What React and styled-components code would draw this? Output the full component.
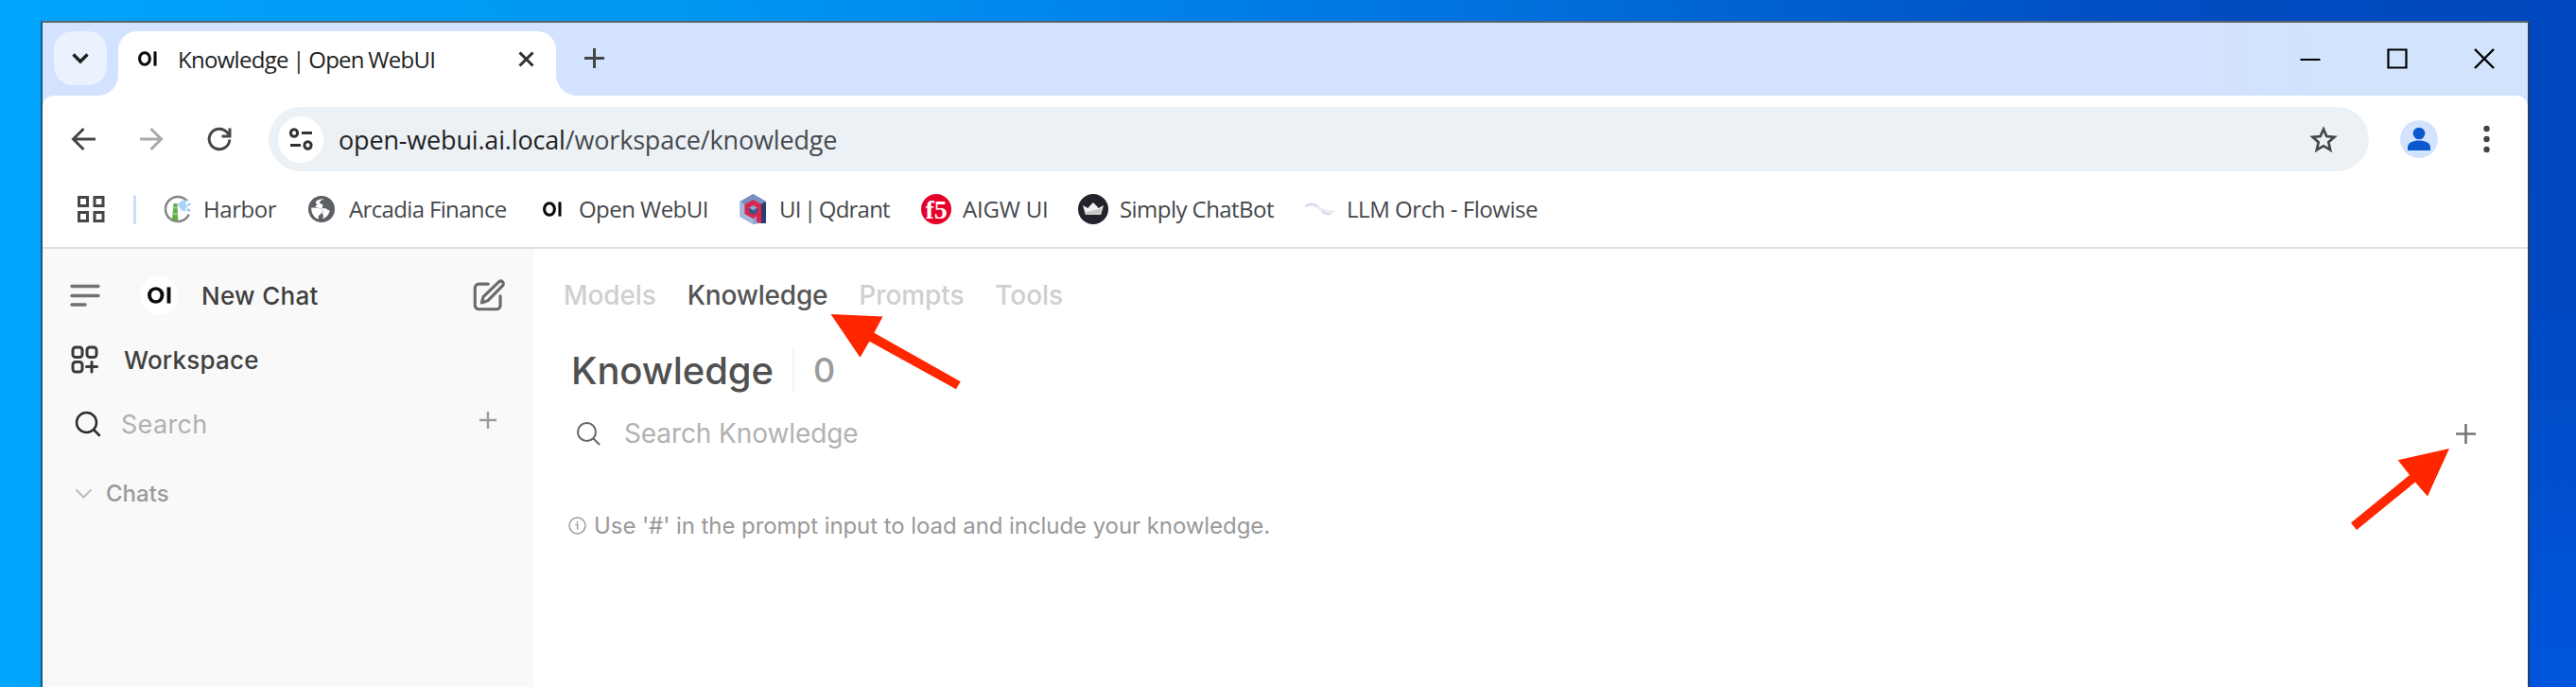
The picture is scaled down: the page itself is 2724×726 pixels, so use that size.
import React from 'react';
import styled, { createGlobalStyle } from 'styled-components';

const UI = '"Open Sans", "Noto Sans", sans-serif';
const APP = 'Inter, "Liberation Sans", sans-serif';

const Global = createGlobalStyle`
  * { box-sizing: border-box; }
  body { margin: 0; overflow: hidden; }
`;

/* ---------- desktop and window frame ---------- */
const Desktop = styled.div`
  width: 2724px;
  height: 726px;
  padding: 22px 49px 0 43px;
  overflow: hidden;
  position: relative;
  background:
    linear-gradient(to bottom, #0048bd, #0049c2 45%, #0055dc) right top / 49px 100% no-repeat,
    linear-gradient(to right, #00a5fd 0%, #009ef7 9%, #0098f1 26%, #0089ed 39%, #0074df 56%, #005fce 70%, #004fc2 82%, #0047bc 100%);
`;
const Window = styled.div`
  display: flex;
  flex-direction: column;
  height: 704px;
  background: #fff;
  border: solid;
  border-width: 2px 2px 0;
  border-color: #56646f #1d3f70 #000 #145a82;
`;

/* ---------- tab strip ---------- */
const TabStrip = styled.div`
  display: flex;
  align-items: flex-start;
  height: 77px;
  padding: 9px 35px 0 12px;
  background: linear-gradient(90deg, #d3e2fe 87%, #d1e4fc 92%);
`;
const TabSearch = styled.div`
  display: flex;
  align-items: center;
  justify-content: center;
  width: 56px;
  height: 57px;
  border-radius: 20px;
  background: #eaf3fd;
`;
const Tab = styled.div`
  position: relative;
  display: flex;
  align-items: center;
  width: 463px;
  height: 68px;
  margin-left: 12px;
  padding: 0 23px 10px 21px;
  border-radius: 20px 20px 0 0;
  background: #fff;
  &::before, &::after {
    content: '';
    position: absolute;
    bottom: 0;
    width: 22px;
    height: 22px;
  }
  &::before { left: -22px; background: radial-gradient(circle at 0 0, transparent 21.5px, #fff 22.5px); }
  &::after { right: -22px; background: radial-gradient(circle at 100% 0, transparent 21.5px, #fff 22.5px); }
`;
const TabTitle = styled.span`
  flex: 1;
  margin-left: 22px;
  font: 24px ${UI};
  letter-spacing: -0.72px;
  word-spacing: -1px;
  white-space: nowrap;
  color: #1f1f1f;
`;
const NewTab = styled.div`
  display: flex;
  margin: 18px 0 0 30px;
`;
const WindowControls = styled.div`
  display: flex;
  gap: 70px;
  margin: 18px 0 0 auto;
`;

/* ---------- toolbar ---------- */
const ToolbarBack = styled.div`background: #d1e3fd;`;
const Toolbar = styled.div`
  display: flex;
  align-items: center;
  height: 92px;
  padding: 0 38px 0 29px;
  border-radius: 12px 12px 0 0;
  background: #fff;
`;
const NavButtons = styled.div`
  display: flex;
  gap: 44px;
`;
const AddressBar = styled.div`
  display: flex;
  align-items: center;
  flex: 1;
  height: 68px;
  margin: 0 33px 0 38px;
  padding: 0 33px 0 10px;
  border-radius: 34px;
  background: #ecf1f6;
`;
const SiteInfo = styled.div`
  display: flex;
  align-items: center;
  justify-content: center;
  width: 48px;
  height: 49px;
  border-radius: 50%;
  background: #fff;
`;
const Url = styled.span`
  flex: 1;
  margin-left: 16px;
  font: 27px ${UI};
  letter-spacing: -0.17px;
  white-space: nowrap;
  color: #474a4e;
  b { font-weight: 400; color: #1f1f1f; }
`;
const Avatar = styled.div`
  display: flex;
  width: 40px;
  height: 40px;
  margin-right: 47px;
  border-radius: 50%;
  background: #d3e3fd;
`;

/* ---------- bookmarks ---------- */
const Bookmarks = styled.div`
  display: flex;
  align-items: center;
  height: 70px;
  padding: 0 0 12px 37px;
  border-bottom: 2px solid #e0e0e0;
  background: #fff;
`;
const Separator = styled.div`
  width: 3px;
  height: 31px;
  margin-left: 30px;
  border-radius: 2px;
  background: #c9defc;
`;
const Spacer = styled.div`width: 30px;`;
const Bookmark = styled.div`
  display: flex;
  align-items: center;
  flex: none;
  gap: ${(p) => p.$gap}px;
  width: ${(p) => p.$width}px;
`;
const BookmarkName = styled.span`
  font: 24px ${UI};
  letter-spacing: ${(p) => p.$spacing}px;
  word-spacing: ${(p) => p.$word || 0}px;
  white-space: nowrap;
  color: #44474c;
  margin-top: -2px;
`;

/* ---------- page ---------- */
const Page = styled.div`
  display: flex;
  flex: 1;
`;
const Sidebar = styled.aside`
  width: 519px;
  padding-top: 15px;
  background: #f9f9f9;
`;
const SideRow = styled.div`
  display: flex;
  align-items: center;
  height: ${(p) => p.$height || 68}px;
  padding: 0 ${(p) => p.$right || 0}px 0 ${(p) => p.$left}px;
`;
const SideLabel = styled.span`
  flex: 1;
  margin-left: ${(p) => p.$gap}px;
  font: ${(p) => p.$weight || 450} ${(p) => p.$size || 26}px ${APP};
  letter-spacing: ${(p) => p.$spacing || 0}px;
  color: ${(p) => p.$color || '#3f3f3f'};
  white-space: nowrap;
`;
const LogoBadge = styled.div`
  display: flex;
  align-items: center;
  justify-content: center;
  width: 40px;
  height: 42px;
  margin-left: 42px;
  border-radius: 50%;
  background: #fff;
`;
const PlusShift = styled.div`
  display: flex;
  padding-bottom: 8px;
`;
const Main = styled.main`
  flex: 1;
  padding: 16px 55px 0 0;
  background: #fff;
`;
const SectionNav = styled.nav`
  display: flex;
  align-items: center;
  gap: 33px;
  height: 66px;
  padding-left: 32px;
`;
const SectionLink = styled.span`
  font: 500 28px ${APP};
  letter-spacing: ${(p) => (p.$active ? -0.2 : -0.1)}px;
  color: ${(p) => (p.$active ? '#545454' : '#cfcfcf')};
`;
const Heading = styled.div`
  display: flex;
  align-items: center;
  height: 92px;
  padding-left: 40px;
`;
const Title = styled.h1`
  width: 234px;
  margin: 0;
  font: 450 40px ${APP};
  letter-spacing: -0.1px;
  color: #505050;
`;
const Count = styled.span`
  display: flex;
  align-items: center;
  height: 47px;
  padding-left: 20px;
  border-left: 2px solid #f3f3f3;
  font: 450 36px ${APP};
  color: #9b9b9b;
`;
const SearchRow = styled.div`
  display: flex;
  align-items: center;
  height: 42px;
  padding-left: 45px;
`;
const Placeholder = styled.span`
  flex: 1;
  margin-left: 25px;
  font: 28px ${APP};
  letter-spacing: -0.1px;
  color: #b2b2b2;
`;
const Hint = styled.div`
  display: flex;
  align-items: center;
  gap: 8px;
  height: 40px;
  margin-top: 56px;
  padding-left: 37px;
  font: 24px ${APP};
  letter-spacing: -0.07px;
  color: #999;
  white-space: nowrap;
`;
const Annotations = styled.svg`
  position: absolute;
  inset: 0;
`;
const Svg = styled.svg`
  display: block;
  flex: none;
  overflow: visible;
`;

/* ---------- drawings ---------- */
const Icon = ({ w, h = w, vb, children, color = '#444', sw = 3, cap = 'butt' }) => (
  <Svg width={w} height={h} viewBox={vb || `0 0 ${w} ${h}`} preserveAspectRatio="none" fill="none" stroke={color} strokeWidth={sw} strokeLinecap={cap} strokeLinejoin={cap === 'round' ? 'round' : 'miter'}>
    {children}
  </Svg>
);

const OpenLogo = ({ w = 20, h = 16 }) => (
  <Icon w={w} h={h} vb="0 0 20 16" color="#0b0b0b" sw={3.1}>
    <ellipse cx="7" cy="8" rx="5.4" ry="6.3" />
    <path d="M18 0.4V15.6" />
  </Icon>
);

const HarborIcon = () => (
  <Icon w={28} sw={0}>
    <path d="M25.8 19.5A13 13 0 1 1 23 4.6" stroke="#858585" strokeWidth="2.5" />
    <path d="M9.5 8h4l.8 18.5c-2.2 .5-4.8 0-6.3-1z" fill="#5fae48" />
    <path d="M8.8 12.5h5.5M8.5 19h6" stroke="#a9d69b" strokeWidth="1.5" />
    <path d="M14 9l5-4.5 4 1-1 3 3 2-3 3 1 3-5-1z" fill="#a8d3fa" />
    <path d="M23 5l2-1M24.5 9h3M24 14l3 2" stroke="#8cc0f2" strokeWidth="2.2" />
  </Icon>
);

const GlobeIcon = () => (
  <Icon w={28} sw={0}>
    <circle cx="14" cy="14" r="14" fill="#5c5f63" />
    <path d="M3.2 12.6c3.5.1 7.6.1 9.6 1 1.7.8 3 1.5 2.7 3.1-.3 1.3-2.1 1-2.3 2.3-.1 1.3-2.500 1.200-2.500 2.700 0 1.200.3 2.200.2 3.100C6.500 23.500 3 19 3.200 12.600z" fill="#fff" />
    <path d="M16.5 3.2c-2 .9-4.5 2.2-4.700 3.900-.1 1.500 2.500 1 3.500 2.300.9 1.200-1.500 2.500-.3 3.400 1.300.9 3 .2 4.400.9 1 .5 1.300 2 3.400 1.300-.4 3.500-2.800 7.500-7.500 9.300-.3-1.800 1.400-2.800.4-4-1-1.100-1.200-1.500-.2-2.800.8-1-.1-3.200-2-4-2-.9-5.200-.6-6-1.900-.6-1.300 1.800-1.500 2.500-2.500-1.800-.6-2.600-1.500-2.100-2.900C9.500 4.200 13 2.800 16.500 3.200z" fill="#fff" />
  </Icon>
);

const QdrantIcon = () => (
  <Icon w={29} h={32} sw={0}>
    <path d="M14.5 0L28 8v23h-6l-7.5 1L0.5 24V8z" fill="#8ba3cd" />
    <path d="M14.5 0L28 8l-5 3-8.5-5-9 5L0.5 8z" fill="#7790c0" />
    <path d="M28 8v23h-6V11z" fill="#293d70" />
    <path d="M0.5 8l5 3v10l9 5.5V32L0.5 24z" fill="#a4b8dc" />
    <path d="M14.5 6l8.5 5v20l-5-1.5v-6l-3.5 2.5-9-5V11z" fill="#dc244c" />
    <path d="M14.5 12l4.5 2.5v5L14.5 22 10 19.5v-5z" fill="#3b5587" />
    <path d="M14.5 12l4.5 2.5-4.5 2.7-4.5-2.7z" fill="#91a8d0" />
  </Icon>
);

const F5Text = styled.text`
  font: 700 28px/1 "Liberation Serif", serif;
  letter-spacing: 0;
`;
const F5Icon = () => (
  <Icon w={32} sw={0}>
    <circle cx="16" cy="16" r="16" fill="#e4002b" />
    <F5Text x="4.5" y="25.5" fill="#fff">f5</F5Text>
  </Icon>
);

const CrownIcon = () => (
  <Icon w={32} sw={0}>
    <circle cx="16" cy="16" r="16" fill="#23242b" />
    <path d="M5 12l5.5 3 1.5-2 4-4 4 4 1.5 2L27 12l-3 10H8z" fill="#f1f1f1" />
    <path d="M7.2 19.5L26 15l-2 7H8z" fill="#c9c9c9" />
  </Icon>
);

const FlowiseIcon = () => (
  <Icon w={32} h={14} color="#cdd2e8" sw={1}>
    <path d="M0 5c4-6 10-4 14-1s9 6 17 5c-4 5-10 4-14 0S7 1 0 5z" fill="#f0f1f7" stroke="#e3e5f0" />
    <path d="M0 4c5-4 10-3 14 0M18 9c3 3 6 4 9 3" stroke="#ccd2e8" strokeWidth="1.5" />
  </Icon>
);

const BOOKMARKS = [
  { name: 'Harbor', icon: <HarborIcon />, width: 152, gap: 13, spacing: -0.45 },
  { name: 'Arcadia Finance', icon: <GlobeIcon />, width: 248, gap: 15, spacing: -0.65 },
  { name: 'Open WebUI', icon: <OpenLogo />, width: 208, gap: 18, spacing: -0.55 },
  { name: 'UI | Qdrant', icon: <QdrantIcon />, width: 192, gap: 13, spacing: -0.8, word: -2 },
  { name: 'AIGW UI', icon: <F5Icon />, width: 166, gap: 12, spacing: -0.2 },
  { name: 'Simply ChatBot', icon: <CrownIcon />, width: 240, gap: 12, spacing: -0.55 },
  { name: 'LLM Orch - Flowise', icon: <FlowiseIcon />, width: 260, gap: 12, spacing: -0.45 },
];

export default function App() {
  return (
    <Desktop>
      <Global />
      <Window>
        <TabStrip>
          <TabSearch>
            <Icon w={18} h={12} color="#1f1f1f" sw={3.4}><path d="M1.5 1.5L9 9l7.5-7.5" /></Icon>
          </TabSearch>
          <Tab>
            <OpenLogo />
            <TabTitle>Knowledge | Open WebUI</TabTitle>
            <Icon w={17} color="#303030" sw={3}><path d="M1.5 1.5l14 14M15.5 1.5l-14 14" /></Icon>
          </Tab>
          <NewTab>
            <Icon w={21} color="#444746" sw={3}><path d="M10.5 0v21M0 10.5h21" /></Icon>
          </NewTab>
          <WindowControls>
            <Icon w={22} h={23} color="#000" sw={2}><path d="M0.5 12h21" /></Icon>
            <Icon w={22} color="#000" sw={2.2}><path d="M1.5 1.5h19v19h-19z" /></Icon>
            <Icon w={22} color="#000" sw={2.4}><path d="M1 1l20 20M21 1L1 21" /></Icon>
          </WindowControls>
        </TabStrip>
        <ToolbarBack>
          <Toolbar>
            <NavButtons>
              <Icon w={28} color="#444746" sw={3}><path d="M27 14H4M14.5 3L3.5 14l11 11" /></Icon>
              <Icon w={28} color="#a8a9aa" sw={3}><path d="M2 14h22M13.5 3l11 11-11 11" /></Icon>
              <Icon w={28} color="#444746" sw={3}><path d="M24.8 14.5a10.8 10.8 0 1 1-3-8l3 3.5M25 2.5v8.5h-8.5" /></Icon>
            </NavButtons>
            <AddressBar>
              <SiteInfo>
                <Icon w={26} h={24} color="#303336" sw={3}>
                  <ellipse cx="6" cy="5.5" rx="3.6" ry="3.8" /><path d="M14 5.5h11M2 18.5h11" /><ellipse cx="20.5" cy="18.5" rx="3.6" ry="3.8" />
                </Icon>
              </SiteInfo>
              <Url><b>open-webui.ai.local</b>/workspace/knowledge</Url>
              <Icon w={30} h={29} color="#444746" sw={2.7}>
                <path d="M15 3.5l3.3 7.5 8.2.8-6.2 5.4 1.9 8.3L15 21.2l-7.2 4.3 1.9-8.3-6.2-5.4 8.2-.8z" />
              </Icon>
            </AddressBar>
            <Avatar>
              <Icon w={40} sw={0}>
                <circle cx="20" cy="14" r="6.3" fill="#0b57d0" />
                <path d="M8 32v-3.5C8 24 14 21.5 20 21.5s12 2.5 12 7V32z" fill="#0b57d0" />
              </Icon>
            </Avatar>
            <Icon w={10} h={32} sw={0}>
              <circle cx="4.5" cy="5" r="3.2" fill="#444" /><circle cx="4.5" cy="16" r="3.2" fill="#444" /><circle cx="4.5" cy="27" r="3.2" fill="#444" />
            </Icon>
          </Toolbar>
        </ToolbarBack>
        <Bookmarks>
          <Icon w={29} h={28} color="#444746" sw={3}>
            <path d="M1.5 1.5h9v9h-9zM18 1.5h9v9h-9zM1.5 17.5h9v9h-9zM18 17.5h9v9h-9z" />
          </Icon>
          <Separator />
          <Spacer />
          {BOOKMARKS.map((b) => (
            <Bookmark key={b.name} $width={b.width} $gap={b.gap}>
              {b.icon}
              <BookmarkName $spacing={b.spacing} $word={b.word}>{b.name}</BookmarkName>
            </Bookmark>
          ))}
        </Bookmarks>
        <Page>
          <Sidebar>
            <SideRow $left={29} $right={28}>
              <Icon w={32} h={24} color="#707070" sw={3.4} cap="round"><path d="M2 2.5h28M2 12.5h28M2 22h14" /></Icon>
              <LogoBadge><OpenLogo w={25} h={18} /></LogoBadge>
              <SideLabel $gap={25} $spacing={0.3}>New Chat</SideLabel>
              <Icon w={38} h={38} vb="0 0 24 24" color="#6b6b6b" sw={2} cap="round">
                <path d="M11.5 4.5H5.3A2.6 2.6 0 0 0 2.7 7v11.7a2.6 2.6 0 0 0 2.6 2.6H17a2.6 2.6 0 0 0 2.6-2.6v-6.2M18.8 2.9a1.8 1.8 0 0 1 2.5 2.5L11.2 15.7l-4 1.3 1.1-4z" />
              </Icon>
            </SideRow>
            <SideRow $left={30}>
              <Icon w={30} h={30} color="#3a3a3a" sw={3} cap="round">
                <rect x="2" y="2" width="10" height="10.5" rx="3" /><rect x="17" y="2" width="10" height="10.5" rx="3" /><rect x="2" y="17.5" width="10" height="10.5" rx="3" /><path d="M22 17.5v10.5M16.5 22.5h11" />
              </Icon>
              <SideLabel $gap={26} $spacing={0.2}>Workspace</SideLabel>
            </SideRow>
            <SideRow $left={34} $right={39}>
              <Icon w={28} h={28} color="#2c2c2c" sw={2.5} cap="round"><circle cx="12.5" cy="12.5" r="10.5" /><path d="M20.5 20.5l5.5 5.5" /></Icon>
              <SideLabel $gap={21} $weight={400} $size={27} $spacing={0.3} $color="#b0b0b0">Search</SideLabel>
              <PlusShift><Icon w={18} color="#9b9b9b" sw={2.4}><path d="M9 0v18M0 9h18" /></Icon></PlusShift>
            </SideRow>
            <SideRow $left={34} $height={79}>
              <Icon w={19} h={12} color="#bdbdbd" sw={2} cap="round"><path d="M2 2l7.5 7.5L17 2" /></Icon>
              <SideLabel $gap={14} $size={24} $color="#9a9a9a">Chats</SideLabel>
            </SideRow>
          </Sidebar>
          <Main>
            <SectionNav>
              <SectionLink>Models</SectionLink>
              <SectionLink $active>Knowledge</SectionLink>
              <SectionLink>Prompts</SectionLink>
              <SectionLink>Tools</SectionLink>
            </SectionNav>
            <Heading>
              <Title>Knowledge</Title>
              <Count>0</Count>
            </Heading>
            <SearchRow>
              <Icon w={26} h={26} color="#666" sw={2} cap="round"><circle cx="11.5" cy="11.5" r="9.5" /><path d="M18.5 18.5l6 6" /></Icon>
              <Placeholder>Search Knowledge</Placeholder>
              <Icon w={21} color="#777" sw={2.6}><path d="M10.5 0v21M0 10.5h21" /></Icon>
            </SearchRow>
            <Hint>
              <Icon w={19} color="#9c9c9c" sw={1.5}><circle cx="9.5" cy="9.5" r="8.5" /><path d="M7.5 8.5h2.2v5M9.5 5v1.8" /></Icon>
              <span>Use '#' in the prompt input to load and include your knowledge.</span>
            </Hint>
          </Main>
        </Page>
      </Window>
      <Annotations width="2724" height="726" viewBox="0 0 2724 726" fill="#ff2600">
        <path d="M878.5 332L933.5 334.5 924.4 351.7 1015.7 403.3 1011 411.3 919.4 360.7 909.5 377.7z" />
        <path d="M2590 474L2535.7 486.3 2548 502 2486 552.5 2492 560 2554 509.5 2567 524.5z" />
      </Annotations>
    </Desktop>
  );
}
